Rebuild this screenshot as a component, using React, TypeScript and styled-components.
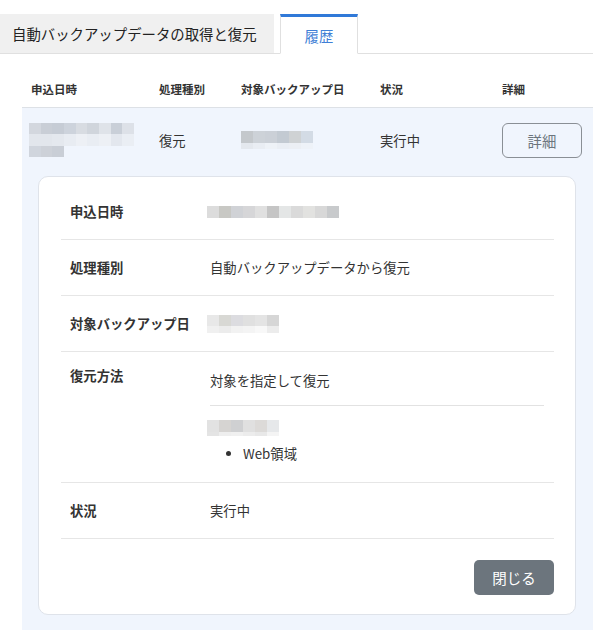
import styled, { createGlobalStyle } from 'styled-components'

const GlobalStyle = createGlobalStyle`
  body {
    margin: 0;
    background: #fff;
    color: #333;
    font-family: "Noto Sans CJK JP", "Noto Sans", sans-serif;
  }
`

const TabBar = styled.div`
  display: flex;
  align-items: flex-end;
  padding-top: 14px;
  border-bottom: 1px solid #e0e0e0;
`

const Tab = styled.div<{ $active?: boolean }>`
  height: ${p => (p.$active ? '36px' : '39px')};
  display: flex;
  align-items: center;
  font-size: 14.4px;
  margin-bottom: -1px;
  ${p =>
    p.$active
      ? `
    width: 76px;
    margin-left: 6px;
    justify-content: center;
    background: #fff;
    color: #3f7fd6;
    border: 1px solid #e0e0e0;
    border-top: 3px solid #3079d8;
    border-bottom: 1px solid #fff;
  `
      : `
    width: 262px;
    padding-left: 12px;
    background: #f0f0f0;
    color: #222;
    border-bottom: 1px solid #e0e0e0;
  `}
`

const Table = styled.div`
  margin: 16px 0 0 22px;
`

const Grid = styled.div`
  display: grid;
  grid-template-columns: 128px 82px 139px 122px 1fr;
  align-items: center;
`

const HeadRow = styled(Grid)`
  height: 37px;
  border-bottom: 1px solid #dde1e6;
`

const HeadCell = styled.div`
  padding-left: 9px;
  font-size: 11.5px;
  font-weight: 700;
  color: #333;
`

const Body = styled.div`
  background: #f0f5fd;
`

const DataRow = styled(Grid)`
  height: 64px;
`

const Cell = styled.div`
  padding-left: 9px;
  font-size: 13.33px;
  color: #333;
`

const OutlineButton = styled.button`
  width: 80px;
  height: 35px;
  border: 1px solid #8a8f95;
  border-radius: 6px;
  background: transparent;
  color: #6c757d;
  font-family: inherit;
  font-size: 14.4px;
  cursor: pointer;
`

const DetailWrap = styled.div`
  padding: 4px 17px 16px 16px;
`

const Card = styled.div`
  background: #fff;
  border: 1px solid #dfe3ea;
  border-radius: 10px;
  padding: 7px 21px 19px 22px;
`

const DetailRow = styled.div<{ $top?: boolean }>`
  display: grid;
  grid-template-columns: 140px 1fr;
  align-items: ${p => (p.$top ? 'start' : 'center')};
  min-height: 55px;
  padding-left: 9px;
  border-bottom: 1px solid #e6e6e6;
  font-size: 13.33px;
  line-height: 20px;
  ${p => (p.$top ? 'padding-top: 14px; padding-bottom: 18px;' : '')}
`

const Label = styled.div`
  font-weight: 700;
  color: #333;
`

const Value = styled.div`
  color: #333;
`

const MethodTitle = styled.div`
  padding-top: 5px;
  padding-bottom: 14px;
  margin-right: 10px;
  border-bottom: 1px solid #e2e2e2;
`

const MethodBody = styled.div`
  padding-top: 14px;
`

const List = styled.ul`
  margin: 8px 0 0;
  padding-left: 33px;
`

const Footer = styled.div`
  display: flex;
  justify-content: flex-end;
  padding-top: 21px;
`

const CloseButton = styled.button`
  width: 80px;
  height: 35px;
  border: none;
  border-radius: 5px;
  background: #6c757d;
  color: #fff;
  font-family: inherit;
  font-size: 14.5px;
  cursor: pointer;
`

const MosaicGrid = styled.div<{ $cols: number; $w: number; $rows: string; $shift?: number }>`
  display: grid;
  grid-template-columns: repeat(${p => p.$cols}, ${p => p.$w}px);
  grid-template-rows: ${p => p.$rows};
  margin-left: ${p => p.$shift ?? 0}px;
`

const Block = styled.span<{ $c: string }>`
  background: ${p => p.$c};
`

function Mosaic({ data, w, rows, shift }: { data: string[][]; w: number; rows: string; shift?: number }) {
  const cols = Math.max(...data.map(r => r.length))
  return (
    <MosaicGrid $cols={cols} $w={w} $rows={rows} $shift={shift}>
      {data.flatMap((r, i) =>
        Array.from({ length: cols }, (_, j) => <Block key={`${i}-${j}`} $c={r[j] ?? 'transparent'} />)
      )}
    </MosaicGrid>
  )
}

const rowDate = [
  ['#d3d7de', '#c9ced6', '#c6ccd5', '#cdd3dc', '#d8dce2', '#d0d5dc', '#dfe3e9', '#c9cfd8', '#dde1e8'],
  ['#e2e6ec', '#e2e6ec', '#e4e8ee', '#e8ecf2', '#edf0f5', '#e9edf3', '#edf0f5', '#e3e7ee', '#eaeef4'],
  ['#d0d5dd', '#cdd1d8', '#c9ced6'],
]

const rowTarget = [
  ['#c4c8cc', '#cdd2d8', '#cbd0d7', '#c3cad2', '#cfd2d4', '#d3dbe5'],
  ['#e4e8ee', '#e9edf3', '#eef2f7', '#eaeef4', '#eceff4', '#eef2f8'],
]

const cardDate = [
  ['#dcdcdc', '#c8c8c4', '#d0d2d6', '#d6d6d8', '#e0e0e0', '#c5c5c5', '#e4e6e6', '#dadada', '#e2e2e0', '#d8d8d8', '#c8cacc'],
]

const cardTarget = [
  ['#e8e8e8', '#d8d8d4', '#dcdce0', '#e0e0e0', '#e4e4e4', '#d6d6d6'],
  ['#f0f0f0', '#ececec', '#f2f2f2', '#f4f4f4', '#f8f8f8', '#ececec'],
]

const cardMethod = [
  ['#e2e2e2', '#d6d4d2', '#cfd0d2', '#e0e0e0', '#dcdad8', '#e6e8ea'],
  ['#e4e4e4', '#eeeeee', '#f0f0f0', '#ececec', '#e8e8e8', '#f4f4f4'],
]

const headers = ['申込日時', '処理種別', '対象バックアップ日', '状況', '詳細']

export default function App() {
  return (
    <>
      <GlobalStyle />
      <TabBar>
        <Tab>自動バックアップデータの取得と復元</Tab>
        <Tab $active>履歴</Tab>
      </TabBar>

      <Table>
        <HeadRow>
          {headers.map(h => (
            <HeadCell key={h}>{h}</HeadCell>
          ))}
        </HeadRow>

        <Body>
          <DataRow>
            <Cell>
              <Mosaic data={rowDate} w={11.67} rows="11.67px 11.67px 11.67px" shift={-2} />
            </Cell>
            <Cell>復元</Cell>
            <Cell>
              <Mosaic data={rowTarget} w={12} rows="12px 6px" shift={0} />
            </Cell>
            <Cell>実行中</Cell>
            <Cell>
              <OutlineButton>詳細</OutlineButton>
            </Cell>
          </DataRow>

          <DetailWrap>
            <Card>
              <DetailRow>
                <Label>申込日時</Label>
                <Mosaic data={cardDate} w={12} rows="12px" shift={-3} />
              </DetailRow>
              <DetailRow>
                <Label>処理種別</Label>
                <Value>自動バックアップデータから復元</Value>
              </DetailRow>
              <DetailRow>
                <Label>対象バックアップ日</Label>
                <Mosaic data={cardTarget} w={12} rows="11px 7px" shift={-3} />
              </DetailRow>
              <DetailRow $top>
                <Label>復元方法</Label>
                <Value>
                  <MethodTitle>対象を指定して復元</MethodTitle>
                  <MethodBody>
                    <Mosaic data={cardMethod} w={12} rows="12px 4px" shift={-3} />
                    <List>
                      <li>Web領域</li>
                    </List>
                  </MethodBody>
                </Value>
              </DetailRow>
              <DetailRow>
                <Label>状況</Label>
                <Value>実行中</Value>
              </DetailRow>
              <Footer>
                <CloseButton>閉じる</CloseButton>
              </Footer>
            </Card>
          </DetailWrap>
        </Body>
      </Table>
    </>
  )
}
